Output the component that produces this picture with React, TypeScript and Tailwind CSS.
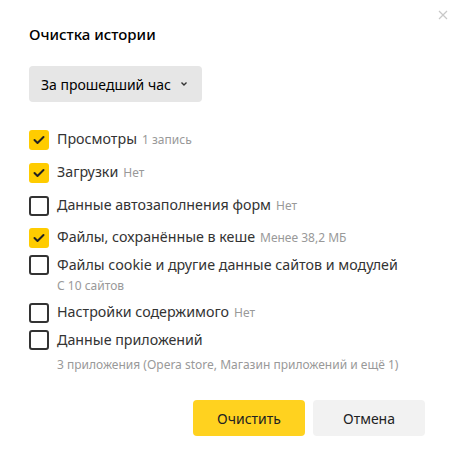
import { useState } from "react";

type Item = { label: string; note?: string; sub?: string; checked: boolean; top: string; subTop?: string };

const items: Item[] = [
  { label: "Просмотры", note: "1 запись", checked: true, top: "mt-0" },
  { label: "Загрузки", note: "Нет", checked: true, top: "mt-[12px]" },
  { label: "Данные автозаполнения форм", note: "Нет", checked: false, top: "mt-[12px]" },
  { label: "Файлы, сохранённые в кеше", note: "Менее 38,2 МБ", checked: true, top: "mt-[11px]" },
  {
    label: "Файлы cookie и другие данные сайтов и модулей",
    sub: "С 10 сайтов",
    checked: false,
    top: "mt-[7px]",
    subTop: "mt-[2px]",
  },
  { label: "Настройки содержимого", note: "Нет", checked: false, top: "mt-[7px]" },
  {
    label: "Данные приложений",
    sub: "3 приложения (Opera store, Магазин приложений и ещё 1)",
    checked: false,
    top: "mt-[7px]",
    subTop: "mt-[6px]",
  },
];

function Box({ checked }: { checked: boolean }) {
  if (checked) {
    return (
      <span className="flex h-5 w-5 shrink-0 items-center justify-center rounded-[3px] bg-[#ffcc00]">
        <svg width="12" height="10" viewBox="0 0 12 10" fill="none">
          <path d="M1.5 5l3 3 6-6" stroke="#222" strokeWidth="2" strokeLinecap="round" strokeLinejoin="round" />
        </svg>
      </span>
    );
  }
  return <span className="h-5 w-5 shrink-0 rounded-[3px] border-2 border-[#333]" />;
}

export default function App() {
  const [state, setState] = useState(items.map((i) => i.checked));

  return (
    <div className="relative h-[463px] w-[457px] bg-white font-['Noto_Sans',sans-serif] text-[#333]">
      <button className="absolute right-[5px] top-[6px] p-1 text-[#c8c8c8]">
        <svg width="10" height="10" viewBox="0 0 10 10">
          <path d="M1 1l8 8M9 1l-8 8" stroke="currentColor" strokeWidth="1.2" />
        </svg>
      </button>

      <div className="pl-[29px] pt-[24px]">
        <h1 className="text-[15px] font-medium leading-5 text-black">Очистка истории</h1>

        <button className="mt-[22px] flex h-[36px] w-[173px] items-center rounded-[4px] bg-[#e6e6e6] pl-[12px] text-[14px] text-black">
          За прошедший час
          <svg className="ml-[9px]" width="8" height="6" viewBox="0 0 8 6">
            <path d="M1.5 1.5l2.5 2.5 2.5-2.5" stroke="#333" strokeWidth="1.4" fill="none" />
          </svg>
        </button>

        <ul className="mt-[27px] flex flex-col">
          {items.map((it, i) => (
            <li key={it.label} className={it.top}>
              <label
                className="flex cursor-pointer items-center gap-[8px]"
                onClick={() => setState((s) => s.map((v, j) => (j === i ? !v : v)))}
              >
                <Box checked={state[i]} />
                <span className="text-[14.25px] leading-5 text-[#333]">
                  {it.label}
                  {it.note && <span className="ml-[5px] text-[12px] text-[#999]">{it.note}</span>}
                </span>
              </label>
              {it.sub && (
                <div className={`${it.subTop} ml-[28px] text-[12px] leading-[18px] text-[#999]`}>{it.sub}</div>
              )}
            </li>
          ))}
        </ul>
      </div>

      <div className="absolute bottom-[27px] right-[32px] flex gap-[8px]">
        <button className="h-[36px] w-[112px] rounded-[4px] bg-[#ffd21f] text-[14px] text-[#222]">Очистить</button>
        <button className="h-[36px] w-[112px] rounded-[4px] bg-[#f2f2f2] text-[14px] text-[#222]">Отмена</button>
      </div>
    </div>
  );
}
